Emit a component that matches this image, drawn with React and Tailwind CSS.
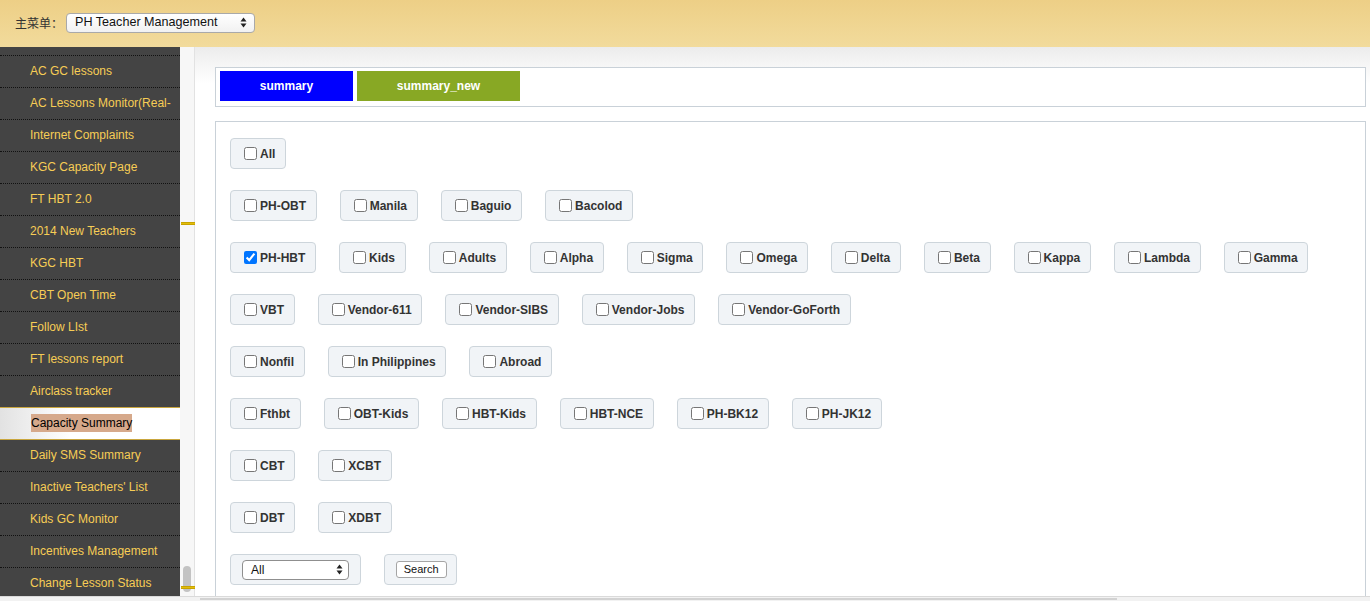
import React from "react";

const menuItems = [
  "",
  "AC GC lessons",
  "AC Lessons Monitor(Real-",
  "Internet Complaints",
  "KGC Capacity Page",
  "FT HBT 2.0",
  "2014 New Teachers",
  "KGC HBT",
  "CBT Open Time",
  "Follow LIst",
  "FT lessons report",
  "Airclass tracker",
  "Capacity Summary",
  "Daily SMS Summary",
  "Inactive Teachers' List",
  "Kids GC Monitor",
  "Incentives Management",
  "Change Lesson Status",
];
const ACTIVE = "Capacity Summary";

const groups = [
  ["All"],
  ["PH-OBT", "Manila", "Baguio", "Bacolod"],
  ["PH-HBT", "Kids", "Adults", "Alpha", "Sigma", "Omega", "Delta", "Beta", "Kappa", "Lambda", "Gamma"],
  ["VBT", "Vendor-611", "Vendor-SIBS", "Vendor-Jobs", "Vendor-GoForth"],
  ["Nonfil", "In Philippines", "Abroad"],
  ["Fthbt", "OBT-Kids", "HBT-Kids", "HBT-NCE", "PH-BK12", "PH-JK12"],
  ["CBT", "XCBT"],
  ["DBT", "XDBT"],
];

function UpDown() {
  return (
    <svg width="7" height="11" viewBox="0 0 7 11">
      <path d="M3.5 0.5 L6.5 4.5 L0.5 4.5 Z" fill="#222" />
      <path d="M3.5 10.5 L6.5 6.5 L0.5 6.5 Z" fill="#222" />
    </svg>
  );
}

function Pill({ children }) {
  return (
    <div className="h-[31px] flex items-center border border-[#cdd5db] rounded-[4px] bg-[#f1f4f7] pl-[13px] pr-[9.7px]">
      {children}
    </div>
  );
}

function CheckPill({ label }) {
  const checked = label === "PH-HBT";
  return (
    <Pill>
      <input
        type="checkbox"
        defaultChecked={checked}
        className="m-0 mr-[3px] w-[13px] h-[13px]"
      />
      <span className="text-[12px] font-bold text-[#333]">{label}</span>
    </Pill>
  );
}

export default function App() {
  return (
    <div className="w-[1370px] h-[601px] overflow-hidden flex flex-col bg-white font-['Liberation_Sans','Noto_Sans_CJK_SC',sans-serif]">
      {/* top bar */}
      <div className="h-[47px] shrink-0 flex items-center pl-[15px] bg-[linear-gradient(to_bottom,#edcf86,#f2db9c)]">
        <span className="text-[12px] text-[#333] mr-[3px]">主菜单：</span>
        <div className="w-[189px] h-[20px] -mt-[2px] flex items-center justify-between pl-[8px] pr-[7px] rounded-[4px] border border-[#a9a9a9] bg-[linear-gradient(to_bottom,#ffffff,#f1f1f1)]">
          <span className="text-[12.6px] text-[#111]">PH Teacher Management</span>
          <UpDown />
        </div>
      </div>

      <div className="flex flex-1 min-h-0">
        {/* left menu */}
        <div className="w-[180px] shrink-0 overflow-hidden bg-[#444444]">
          <div className="-mt-[24px]">
            {menuItems.map((item, i) => {
              const active = item === ACTIVE;
              const afterActive = i > 0 && menuItems[i - 1] === ACTIVE;
              if (active) {
                return (
                  <div
                    key={i}
                    className="h-[33px] flex items-center pl-[31px] pb-[2px] border-y border-[#c9a63e] bg-[linear-gradient(to_right,#e2e2e2,#ffffff_70px)]"
                  >
                    <span className="text-[12px] text-black bg-[#d6a98b]">{item}</span>
                  </div>
                );
              }
              return (
                <div
                  key={i}
                  className={
                    afterActive
                      ? "h-[31px] flex items-center pl-[30px] pb-[2px] text-[12px] text-[#f7cd55]"
                      : "h-[32px] flex items-center pl-[30px] pb-[2px] text-[12px] text-[#f7cd55] border-t border-dotted border-[#111]"
                  }
                >
                  {item}
                </div>
              );
            })}
          </div>
        </div>

        {/* side scroll track */}
        <div className="relative w-[15px] shrink-0 bg-[#f7f7f7] border-r border-[#e2e2e2]">
          <div className="absolute left-[1px] top-[175px] w-[14px] h-[3px] bg-[#e2bd0a] border-y border-[#c8a300]" />
          <div className="absolute left-[3px] top-[519px] w-[8px] h-[26px] rounded-full bg-[#c3c3c3]" />
          <div className="absolute left-[1px] top-[539px] w-[14px] h-[3px] bg-[#e2bd0a] border-y border-[#c8a300]" />
        </div>

        {/* content */}
        <div className="flex-1 min-w-0 overflow-hidden pl-[20px] pr-[4px] pt-[20px] bg-[linear-gradient(to_bottom,#ececec,#ffffff_36px)]">
          <div className="h-[40px] border border-[#c9d1d8] bg-white flex gap-[4px] pl-[4px] pt-[3px]">
            <div className="w-[133px] h-[30px] bg-[#0000ff] flex items-center justify-center text-white text-[12px] font-bold">
              summary
            </div>
            <div className="w-[163px] h-[30px] bg-[#88a824] flex items-center justify-center text-white text-[12px] font-bold">
              summary_new
            </div>
          </div>

          <div className="mt-[14px] h-[600px] border border-[#c9d1d8] bg-white pl-[14px] pt-[16px] flex flex-col gap-[21px]">
            {groups.map((row, r) => (
              <div key={r} className="flex gap-[23px]">
                {row.map((label) => (
                  <CheckPill key={label} label={label} />
                ))}
              </div>
            ))}
            <div className="flex gap-[23px]">
              <Pill>
                <div className="w-[107px] h-[20px] -ml-[2px] mr-[1px] flex items-center justify-between pl-[8px] pr-[5px] rounded-[4px] border border-[#8f8f8f] bg-white">
                  <span className="text-[12px] text-[#111]">All</span>
                  <UpDown />
                </div>
              </Pill>
              <Pill>
                <div className="h-[17px] -ml-[2px] px-[7px] flex items-center rounded-[3px] border border-[#a5a5a5] bg-white text-[11px] text-[#111]">
                  Search
                </div>
              </Pill>
            </div>
          </div>
        </div>
      </div>

      {/* bottom scrollbar */}
      <div className="h-[5px] shrink-0 bg-[#f2f2f2] border-t border-[#dadada]">
        <div className="ml-[200px] w-[917px] h-[2px] mt-[1px] bg-[#d2d2d2]" />
      </div>
    </div>
  );
}
